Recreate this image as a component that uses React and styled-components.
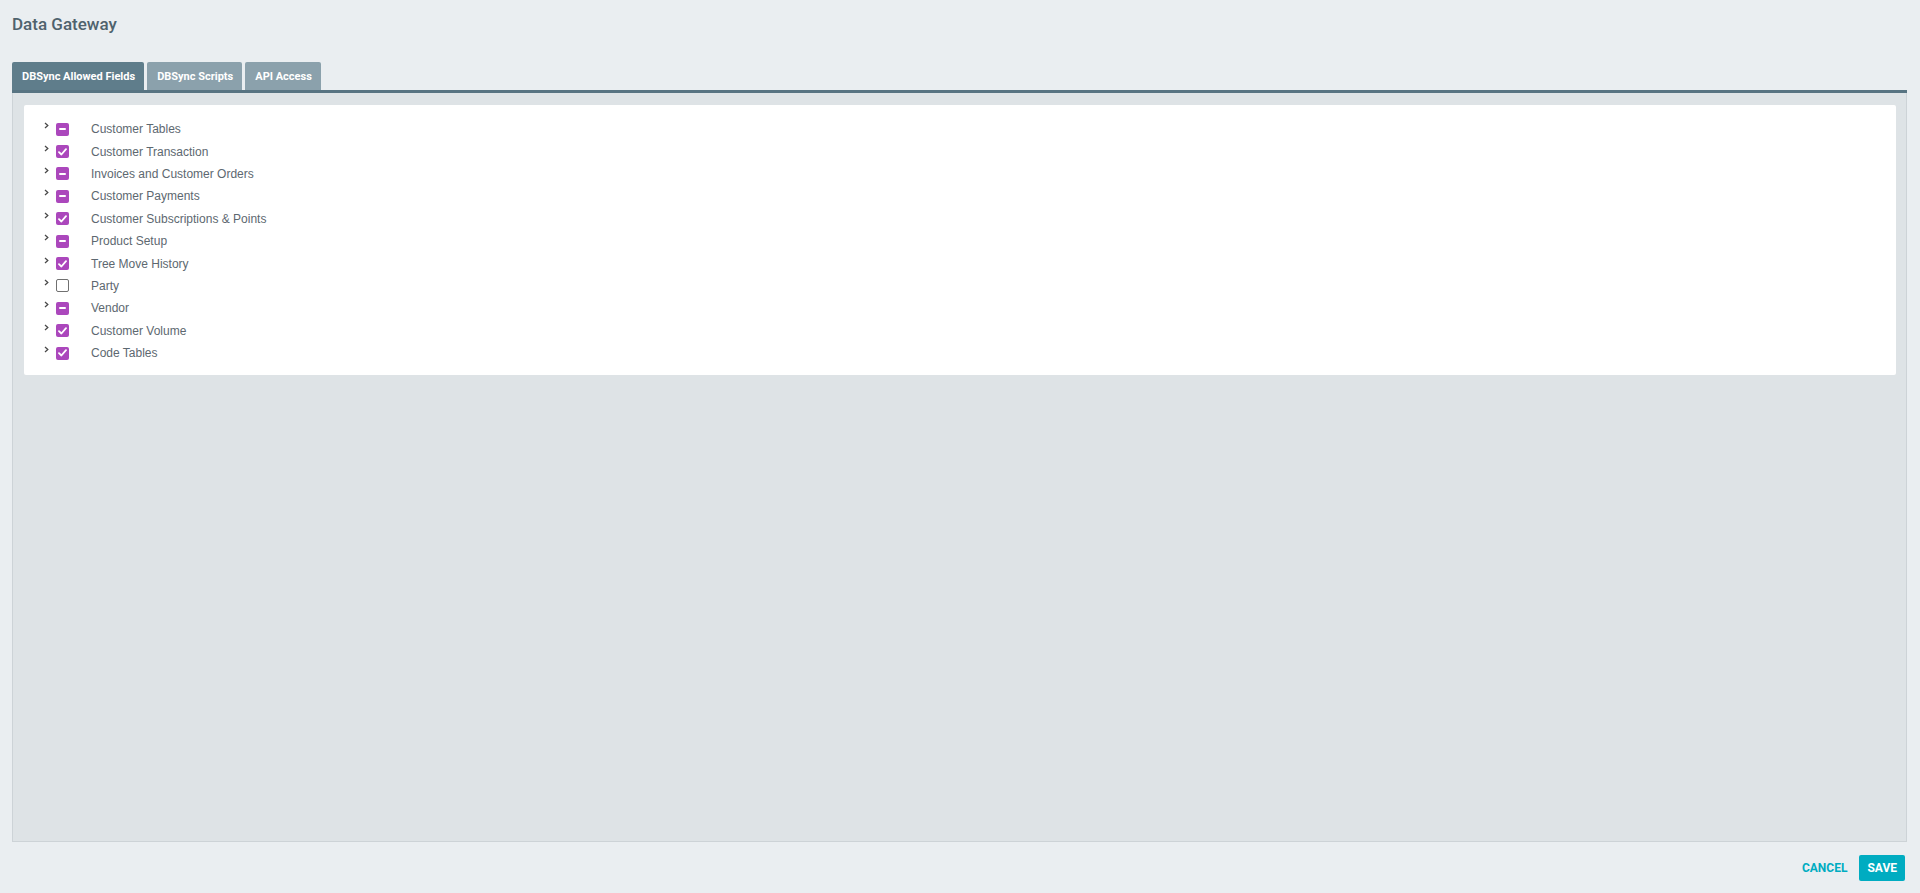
import React from 'react';
import styled, { createGlobalStyle } from 'styled-components';

const GlobalStyle = createGlobalStyle`
  html, body {
    margin: 0;
    padding: 0;
    background: #eaeef1;
  }
  * {
    box-sizing: border-box;
  }
`;

const Page = styled.div`
  height: 100vh;
  display: flex;
  flex-direction: column;
  padding: 12px 13px 12px 12px;
  font-family: Roboto, "Liberation Sans", sans-serif;
`;

const Title = styled.h1`
  margin: 0 0 26px 0;
  font-size: 17px;
  line-height: 24px;
  font-weight: 500;
  color: #4f626d;
`;

const TabBar = styled.div`
  display: flex;
  gap: 3px;
  border-bottom: 3px solid #587482;
`;

const Tab = styled.button`
  height: 28px;
  padding: 0 9px 0 10px;
  border: none;
  border-radius: 2px 2px 0 0;
  background: ${(p) => (p.active ? '#5f7d8b' : '#8ba1ac')};
  color: #ffffff;
  font-family: Roboto, "Liberation Sans", sans-serif;
  font-size: 11px;
  font-weight: 700;
  cursor: pointer;
`;

const Panel = styled.div`
  flex: 1;
  background: #dee3e6;
  border: 1px solid #cdd3d7;
  border-top: none;
  padding: 12px 10px 12px 11px;
`;

const Card = styled.div`
  background: #ffffff;
  border-radius: 2px;
  padding: 13px 0 11px 0;
`;

const Row = styled.div`
  display: flex;
  align-items: center;
  height: 22.4px;
  padding-left: 20px;
`;

const Chevron = styled.span`
  display: flex;
  width: 12px;
  height: 22px;
  align-items: center;
  margin-top: -7px;
`;

const Box = styled.span`
  width: 13px;
  height: 13px;
  border-radius: 2px;
  display: flex;
  align-items: center;
  justify-content: center;
  background: ${(p) => (p.state === 'none' ? '#ffffff' : '#ab47bc')};
  border: ${(p) => (p.state === 'none' ? '1.5px solid #707070' : 'none')};
`;

const Dash = styled.span`
  width: 7px;
  height: 2px;
  background: #ffffff;
  border-radius: 1px;
`;

const Label = styled.span`
  margin-left: 22px;
  font-family: "Liberation Sans", Arial, sans-serif;
  font-size: 12px;
  color: #5d6870;
`;

const Footer = styled.div`
  display: flex;
  justify-content: flex-end;
  align-items: center;
  gap: 12px;
  margin-top: 13px;
  padding-right: 2px;
`;

const TextButton = styled.button`
  border: none;
  background: none;
  padding: 0;
  color: #00acc1;
  font-family: Roboto, "Liberation Sans", sans-serif;
  font-size: 12px;
  font-weight: 700;
  cursor: pointer;
`;

const SaveButton = styled.button`
  height: 26px;
  padding: 0 8px;
  border: none;
  border-radius: 2px;
  background: #00acc1;
  color: #ffffff;
  font-family: Roboto, "Liberation Sans", sans-serif;
  font-size: 12px;
  font-weight: 700;
  cursor: pointer;
`;

const items = [
  { label: 'Customer Tables', state: 'partial' },
  { label: 'Customer Transaction', state: 'all' },
  { label: 'Invoices and Customer Orders', state: 'partial' },
  { label: 'Customer Payments', state: 'partial' },
  { label: 'Customer Subscriptions & Points', state: 'all' },
  { label: 'Product Setup', state: 'partial' },
  { label: 'Tree Move History', state: 'all' },
  { label: 'Party', state: 'none' },
  { label: 'Vendor', state: 'partial' },
  { label: 'Customer Volume', state: 'all' },
  { label: 'Code Tables', state: 'all' },
];

const tabs = ['DBSync Allowed Fields', 'DBSync Scripts', 'API Access'];

const Check = () => (
  <svg width="9" height="8" viewBox="0 0 9 8">
    <path d="M1 4.2 L3.4 6.5 L8 1.2" fill="none" stroke="#fff" strokeWidth="1.8" strokeLinecap="round" strokeLinejoin="round" />
  </svg>
);

const TreeRow = ({ label, state }) => (
  <Row>
    <Chevron>
      <svg width="5" height="7" viewBox="0 0 5 7">
        <path d="M1 1 L3.8 3.5 L1 6" fill="none" stroke="#4a4a4a" strokeWidth="1.3" />
      </svg>
    </Chevron>
    <Box state={state}>
      {state === 'all' && <Check />}
      {state === 'partial' && <Dash />}
    </Box>
    <Label>{label}</Label>
  </Row>
);

const App = () => {
  const [active, setActive] = React.useState(0);

  return (
    <Page>
      <GlobalStyle />
      <Title>Data Gateway</Title>
      <TabBar>
        {tabs.map((t, i) => (
          <Tab key={t} active={i === active} onClick={() => setActive(i)}>
            {t}
          </Tab>
        ))}
      </TabBar>
      <Panel>
        <Card>
          {items.map((item) => (
            <TreeRow key={item.label} {...item} />
          ))}
        </Card>
      </Panel>
      <Footer>
        <TextButton>CANCEL</TextButton>
        <SaveButton>SAVE</SaveButton>
      </Footer>
    </Page>
  );
};

export default App;
